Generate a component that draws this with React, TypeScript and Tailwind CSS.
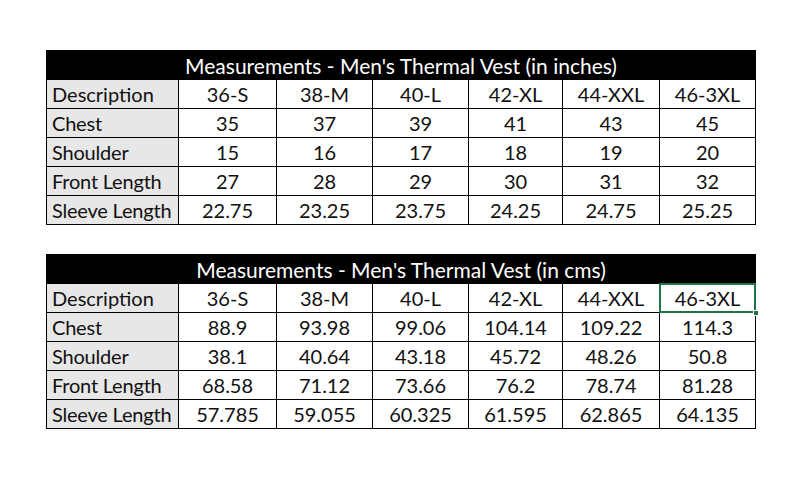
import React from 'react';

const sizes = ['36-S', '38-M', '40-L', '42-XL', '44-XXL', '46-3XL'];

const inches = [
  { label: 'Chest', values: ['35', '37', '39', '41', '43', '45'] },
  { label: 'Shoulder', values: ['15', '16', '17', '18', '19', '20'] },
  { label: 'Front Length', values: ['27', '28', '29', '30', '31', '32'] },
  { label: 'Sleeve Length', values: ['22.75', '23.25', '23.75', '24.25', '24.75', '25.25'] },
];

const cms = [
  { label: 'Chest', values: ['88.9', '93.98', '99.06', '104.14', '109.22', '114.3'] },
  { label: 'Shoulder', values: ['38.1', '40.64', '43.18', '45.72', '48.26', '50.8'] },
  { label: 'Front Length', values: ['68.58', '71.12', '73.66', '76.2', '78.74', '81.28'] },
  { label: 'Sleeve Length', values: ['57.785', '59.055', '60.325', '61.595', '62.865', '64.135'] },
];

const colWidths = [132, 98, 96, 96, 94, 97, 96];

type Row = { label: string; values: string[] };

const SizeTable: React.FC<{ title: string; rows: Row[]; selectLast?: boolean }> = ({ title, rows, selectLast }) => (
  <table className="table-fixed border-collapse w-[709px] text-[20px] leading-none text-[#111]">
    <colgroup>
      {colWidths.map((w, i) => (
        <col key={i} style={{ width: w }} />
      ))}
    </colgroup>
    <tbody>
      <tr className="h-[29px]">
        <td colSpan={7} className="bg-black text-white text-[21px] text-center border border-black p-0">
          {title}
        </td>
      </tr>
      <tr className="h-[29px]">
        <td className="bg-[#e7e7e7] border border-black pl-[5px] pr-0 py-0 whitespace-nowrap">Description</td>
        {sizes.map((s, i) => (
          <td key={s} className="relative border border-black text-center p-0">
            {s}
            {selectLast && i === sizes.length - 1 && (
              <>
                <div className="absolute -inset-px border-2 border-[#217346]" />
                <div className="absolute -right-[4px] -bottom-[4px] w-[6px] h-[6px] bg-[#217346] border border-white" />
              </>
            )}
          </td>
        ))}
      </tr>
      {rows.map((r) => (
        <tr key={r.label} className="h-[29px]">
          <td className="bg-[#e7e7e7] border border-black pl-[5px] pr-0 py-0 whitespace-nowrap tracking-[-0.2px]">
            {r.label}
          </td>
          {r.values.map((v, i) => (
            <td key={i} className="border border-black text-center p-0">
              {v}
            </td>
          ))}
        </tr>
      ))}
    </tbody>
  </table>
);

export default function App() {
  return (
    <div className="w-[805px] h-[478px] bg-white pl-[46px] pt-[50px] font-['Lato',sans-serif]">
      <div className="flex flex-col gap-[29px]">
        <SizeTable title="Measurements - Men's Thermal Vest (in inches)" rows={inches} />
        <SizeTable title="Measurements - Men's Thermal Vest (in cms)" rows={cms} selectLast />
      </div>
    </div>
  );
}
